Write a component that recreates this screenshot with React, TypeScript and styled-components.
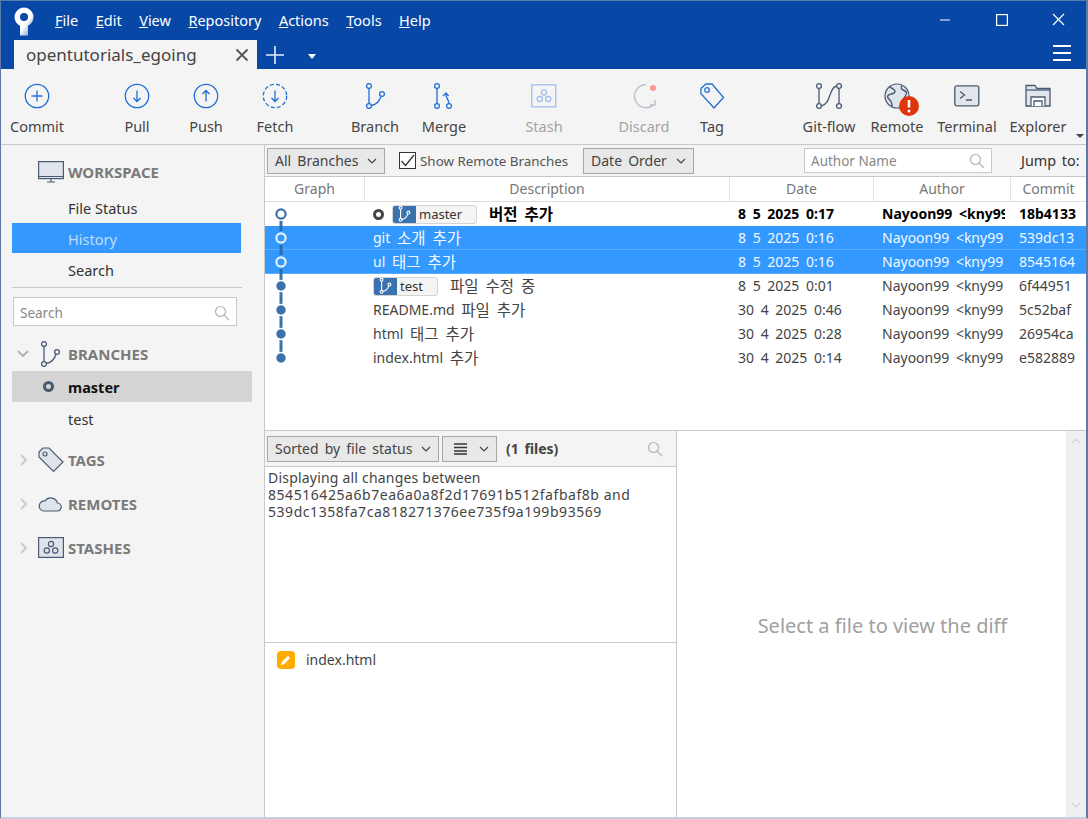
import React from "react";
import styled, { createGlobalStyle } from "styled-components";

const Global = createGlobalStyle`
  html, body { margin: 0; padding: 0; background: #fff; }
  #root { width: 1088px; height: 819px; overflow: hidden; }
  * { box-sizing: border-box; }
`;
const FONT = `"Noto Sans", "Noto Sans CJK KR", sans-serif`;

const Win = styled.div`
  width: 1088px; height: 819px; display: flex; flex-direction: column;
  font-family: ${FONT}; font-size: 14px; color: #333;
  border: 1px solid #5a7aa8; border-bottom: 2px solid #c4cfdf; border-right-width: 2px; background: #f4f4f4; overflow: hidden;
`;
const Title = styled.div`height: 68px; background: #0747a6; display: flex; flex-direction: column; flex: none;`;
const TopRow = styled.div`height: 39px; display: flex; align-items: center; padding-left: 12px;`;
const Menu = styled.div`display: flex; gap: 17.5px; margin-left: 20px; margin-top: -2px;`;
const MenuItem = styled.span`color: #fff; font-size: 14.5px; line-height: 20px;`;
const WinBtns = styled.div`margin-left: auto; display: flex; height: 39px;`;
const WinBtn = styled.div`width: 56px; display: flex; align-items: center; justify-content: center; color: #fff; padding-bottom: 2px;`;
const TabRow = styled.div`height: 29px; display: flex; align-items: stretch; padding-left: 13px;`;
const Tab = styled.div`
  width: 243px; background: #f4f4f4; display: flex; align-items: center; justify-content: space-between;
  padding: 0 8px 0 12px; font-size: 17px; color: #444; line-height: 26px;
`;
const TabAdd = styled.div`width: 36px; display: flex; align-items: center; justify-content: center; color: #e8eef8;`;
const TabCaret = styled.div`
  width: 0; height: 0; margin: 14px 0 0 15px; border-left: 4.5px solid transparent; border-right: 4.5px solid transparent; border-top: 5px solid #fff;
`;
const Burger = styled.div`margin: 0 15px 0 auto; width: 18px; padding-top: 5px; display: flex; flex-direction: column; gap: 5px;`;
const BurgerBar = styled.div`height: 2px; background: #fff;`;

const Toolbar = styled.div`
  height: 76px; flex: none; position: relative; display: flex;
  background: #f4f4f4; border-bottom: 1px solid #c8c8c8;
`;
const Tool = styled.div<{ $x: number; $off?: boolean }>`
  flex: none; width: 68px; margin-left: ${(p) => p.$x}px; display: flex; flex-direction: column; align-items: center;
  padding-top: 11px; color: ${(p) => (p.$off ? "#a4a4a4" : "#444")}; font-size: 14.5px;
`;
const ToolIcon = styled.div`height: 32px; display: flex; align-items: center; justify-content: center; position: relative;`;
const ToolLabel = styled.div`line-height: 20px; margin-top: 4px; white-space: nowrap;`;
const MoreCaret = styled.div`
  position: absolute; right: 2px; bottom: 6px; width: 0; height: 0;
  border-left: 4px solid transparent; border-right: 4px solid transparent; border-top: 4px solid #444;
`;

const Body = styled.div`flex: 1; display: flex; min-height: 0; background: #fff;`;
const Side = styled.div`width: 264px; flex: none; background: #f4f4f4; border-right: 1px solid #c8c8c8; padding: 11px 0 0 11px; color: #333;`;
const SideHead = styled.div<{ $h?: number; $mt?: number; $mb?: number }>`
  display: flex; align-items: center; height: ${(p) => p.$h ?? 32}px; margin-top: ${(p) => p.$mt ?? 0}px; margin-bottom: ${(p) => p.$mb ?? 0}px;
  font-weight: 700; color: #7a7a7a; font-size: 15px; width: 240px;
`;
const Chevron = styled.div<{ $in?: number }>`width: 25px; flex: none; display: flex; justify-content: flex-start; padding-left: ${(p) => p.$in ?? 5}px;`;
const HeadIcon = styled.div`width: 31px; flex: none; display: flex; justify-content: flex-start; padding-left: 1px;`;
const NavItem = styled.div<{ $on?: boolean }>`
  height: 30px; margin-bottom: 1px; width: 229px; padding: 2px 0 0 56px; display: flex; align-items: center; font-size: 14.5px;
  background: ${(p) => (p.$on ? "#3399ff" : "transparent")}; color: ${(p) => (p.$on ? "#c4dcf5" : "#333")};
`;
const SideRule = styled.div`width: 230px; height: 1px; background: #c8c8c8; margin-top: 3px;`;
const SearchField = styled.div<{ $w: number }>`
  width: ${(p) => p.$w}px; height: 29px; background: #fff; border: 1px solid #c8c8c8; display: flex; align-items: center;
  justify-content: space-between; padding: 0 6px; color: #888; font-size: 13.5px;
`;
const AuthorField = styled(SearchField)`margin-left: 110px; height: 25px;`;
const SideSearch = styled(SearchField)`padding-top: 2px;`;
const SideSearchWrap = styled.div`padding: 9px 0 0 1px;`;
const BranchItem = styled.div<{ $on?: boolean }>`
  height: ${(p) => (p.$on ? 31 : 33)}px; width: 240px; display: flex; align-items: center; padding: 1px 0 0 56px; position: relative; font-size: 14.5px;
  background: ${(p) => (p.$on ? "#d4d4d4" : "transparent")}; font-weight: ${(p) => (p.$on ? 700 : 400)}; color: ${(p) => (p.$on ? "#111" : "#333")};
`;
const CurrentDot = styled.div`
  position: absolute; left: 31px; top: 10px; width: 11px; height: 11px; border-radius: 50%; border: 3px solid #4a5a72;
`;

const Main = styled.div`flex: 1; min-width: 0; display: flex; flex-direction: column; background: #fff;`;
const Filter = styled.div`
  height: 32px; flex: none; display: flex; align-items: center; background: #f4f4f4; padding-left: 2px; border-bottom: 1px solid #c8c8c8; font-size: 14px;
`;
const Drop = styled.div<{ $w: number }>`
  width: ${(p) => p.$w}px; height: 26px; border: 1px solid #a8a8a8; background: #e8e8e8; display: flex; align-items: center; justify-content: space-between;
  padding: 0 7px 0 7px; color: #444; font-size: 14px; flex: none; word-spacing: 2.5px; white-space: nowrap;
`;
const Check = styled.div`
  width: 17px; height: 17px; border: 1px solid #333; background: #fff; margin: 0 4px 0 14px; display: flex; align-items: center; justify-content: center;
`;
const FilterLabel = styled.span`width: 163px; font-size: 13.4px; color: #555; white-space: nowrap;`;
const JumpLabel = styled.span`margin-left: 29px; color: #333; font-size: 14.4px; word-spacing: 2px; white-space: nowrap;`;
const HeadRow = styled.div`height: 25px; flex: none; display: flex; border-bottom: 1px solid #dcdcdc; background: #fff;`;
const HeadCell = styled.div<{ $w: number }>`
  width: ${(p) => p.$w}px; flex: none; text-align: center; color: #777; font-size: 14px; line-height: 23px; border-right: 1px solid #e2e2e2;
`;
const Rows = styled.div`height: 229px; flex: none; background: #fff; border-bottom: 1px solid #c8c8c8;`;
const Row = styled.div<{ $sel?: boolean; $bold?: boolean }>`
  height: 24px; display: flex; align-items: center; font-size: 14px; line-height: 24px; white-space: pre; word-spacing: 3px;
  background: ${(p) => (p.$sel ? "#3399ff" : "#fff")}; color: ${(p) => (p.$sel ? "#f2f8ff" : p.$bold ? "#000" : "#444")};
  font-weight: ${(p) => (p.$bold ? 700 : 400)};
  box-shadow: ${(p) => (p.$sel ? "inset 0 -1px 0 #5aadff" : "none")};
`;
const GraphCell = styled.div`width: 100px; height: 24px; flex: none; display: flex;`;
const Cell = styled.div<{ $w: number }>`
  width: ${(p) => p.$w}px; flex: none; padding-left: 8px; overflow: hidden; display: flex; align-items: center;
`;
const CellClip = styled.div`width: 123px; overflow: hidden;`;
const Ko = styled.span`font-size: 15.5px;`;
const HeadDot = styled.div`width: 11px; height: 11px; border-radius: 50%; border: 3px solid #444; margin-right: 8px; flex: none;`;
const Ref = styled.div<{ $w: number }>`
  width: ${(p) => p.$w}px; height: 19px; border: 1px solid #d4d4d4; border-radius: 3px; background: #f4f4f4; display: flex; align-items: center; flex: none;
  margin-right: 12px; font-weight: 400; color: #333; font-size: 13px; overflow: hidden;
`;
const RefIcon = styled.div`width: 23px; height: 17px; flex: none; background: #3a72ae; display: flex; align-items: center; justify-content: center; margin-right: 3px;`;

const Lower = styled.div`flex: 1; display: flex; min-height: 0;`;
const Files = styled.div`width: 412px; flex: none; display: flex; flex-direction: column; border-right: 1px solid #c8c8c8;`;
const FilesBar = styled(Filter)`height: 36px;`;
const FilesCount = styled.span`font-weight: 700; color: #444; font-size: 14px; margin-left: 9px; word-spacing: 2px;`;
const GapDrop = styled.div`margin-left: 3px;`;
const ListGlyph = styled.svg`margin-left: 4px;`;
const FilesSearch = styled.div`margin-left: auto; padding-right: 13px; display: flex;`;
const Info = styled.div`
  height: 176px; flex: none; border-bottom: 1px solid #c8c8c8; padding: 2px 3px; font-size: 14px; line-height: 17px; color: #444; background: #fff; letter-spacing: 0.2px;
`;
const Hash = styled.span`letter-spacing: 0.55px;`;
const FileRow = styled.div`display: flex; align-items: center; height: 33px; padding-left: 12px; color: #444; font-size: 14px;`;
const FileBadge = styled.div`
  width: 18px; height: 18px; border-radius: 4px; background: #ffab00; display: flex; align-items: center; justify-content: center; margin-right: 11px;
`;
const Diff = styled.div`flex: 1; display: flex; background: #fff; min-width: 0;`;
const DiffMsg = styled.div`flex: 1; display: flex; align-items: center; justify-content: center; color: #a0a0a0; font-size: 20px; padding: 2px 0 0 22px;`;
const Scroll = styled.div`
  width: 20px; flex: none; background: #efefef; display: flex; flex-direction: column; justify-content: space-between; align-items: center; padding: 7px 0 9px;
`;

const BLUE = "#1f6fd6";
const GREY = "#4a5a72";

const Circle = ({ children, dash }: { children: React.ReactNode; dash?: boolean }) => (
  <svg width="26" height="26" viewBox="0 0 26 26" fill="none" stroke={BLUE} strokeWidth="1.3">
    <circle cx="13" cy="13" r="11.7" strokeDasharray={dash ? "4 2.2" : undefined} />
    {children}
  </svg>
);
const Search = () => (
  <svg width="16" height="16" viewBox="0 0 16 16" fill="none" stroke="#b4b4b4" strokeWidth="1.2">
    <circle cx="6.5" cy="6.5" r="5" /><path d="M10.2 10.2 15 15" />
  </svg>
);
const Caret = () => (
  <svg width="10" height="6" viewBox="0 0 10 6" fill="none" stroke="#444" strokeWidth="1.2"><path d="M1 1l4 4 4-4" /></svg>
);
const BranchGlyph = ({ c, s = 1 }: { c: string; s?: number }) => (
  <svg width={24 * s} height={26 * s} viewBox="0 0 24 26" fill="none" stroke={c} strokeWidth={1.3 / Math.max(s, 0.7)}>
    <circle cx="6" cy="3" r="2.4" /><circle cx="6" cy="23" r="2.4" /><circle cx="19" cy="11" r="2.4" />
    <path d="M6 5.4v15.2M8.4 22.5c5 -1 8 -4 9.6 -9.3" />
  </svg>
);
const RightChevron = () => (
  <svg width="8" height="12" viewBox="0 0 8 12" fill="none" stroke="#cccccc" strokeWidth="2"><path d="M1 1l5 5-5 5" /></svg>
);

const graph = (sel: boolean, mode: string) => {
  const c = sel ? "#2f6aa8" : "#3a72ae";
  const bg = sel ? "#3399ff" : "#fff";
  const open = mode === "open" || mode === "first";
  return (
    <svg width="100" height="24" viewBox="0 0 100 24">
      {mode !== "first" && <path d="M16 0V12" stroke={c} strokeWidth="3" />}
      {mode !== "last" && <path d="M16 12V24" stroke={c} strokeWidth="3" />}
      {open ? (
        <>
          <circle cx="16" cy="12" r="7" fill={bg} />
          <circle cx="16" cy="12" r="4.6" fill={bg} stroke={sel ? "#e8f2ff" : c} strokeWidth="2.2" />
        </>
      ) : (
        <circle cx="16" cy="12" r="5.5" fill={c} stroke={bg} strokeWidth="1.6" />
      )}
    </svg>
  );
};

const rows = [
  { g: "first", pre: "", ko: "버전 추가", date: "8 5 2025 0:17", c: "18b4133", bold: true, ref: "master" },
  { g: "open", pre: "git ", ko: "소개 추가", date: "8 5 2025 0:16", c: "539dc13", sel: true },
  { g: "open", pre: "ul ", ko: "태그 추가", date: "8 5 2025 0:16", c: "8545164", sel: true },
  { g: "fill", pre: "", ko: "파일 수정 중", date: "8 5 2025 0:01", c: "6f44951", ref: "test" },
  { g: "fill", pre: "README.md ", ko: "파일 추가", date: "30 4 2025 0:46", c: "5c52baf" },
  { g: "fill", pre: "html ", ko: "태그 추가", date: "30 4 2025 0:28", c: "26954ca" },
  { g: "last", pre: "index.html ", ko: "추가", date: "30 4 2025 0:14", c: "e582889" },
];

export default function App() {
  return (
    <Win>
      <Global />
      <Title>
        <TopRow>
          <svg width="22" height="30" viewBox="0 0 22 30">
            <defs>
              <linearGradient id="logoFade" x1="0.3" y1="0.2" x2="0.9" y2="0.8">
                <stop offset="0.55" stopColor="#fff" />
                <stop offset="1" stopColor="#8fb0e0" />
              </linearGradient>
            </defs>
            <path d="M11 1.5a9.6 9.6 0 0 1 4 18.3V29.5H7V19.8A9.6 9.6 0 0 1 11 1.5z" fill="url(#logoFade)" />
            <circle cx="11" cy="11" r="4" fill="#0747a6" />
          </svg>
          <Menu>
            {["File", "Edit", "View", "Repository", "Actions", "Tools", "Help"].map((m) => (
              <MenuItem key={m}><u>{m[0]}</u>{m.slice(1)}</MenuItem>
            ))}
          </Menu>
          <WinBtns>
            <WinBtn><svg width="12" height="12" viewBox="0 0 12 12" stroke="#fff" strokeWidth="1"><path d="M-2 6h12" /></svg></WinBtn>
            <WinBtn><svg width="12" height="12" viewBox="0 0 12 12" fill="none" stroke="#fff" strokeWidth="1.2"><rect x=".6" y=".6" width="10.8" height="10.8" /></svg></WinBtn>
            <WinBtn><svg width="13" height="13" viewBox="0 0 13 13" stroke="#fff" strokeWidth="1.2"><path d="M1 1l11 11M12 1 1 12" /></svg></WinBtn>
          </WinBtns>
        </TopRow>
        <TabRow>
          <Tab>
            opentutorials_egoing
            <svg width="14" height="14" viewBox="0 0 14 14" stroke="#555" strokeWidth="1.8"><path d="M1.5 1.5l11 11M12.5 1.5l-11 11" /></svg>
          </Tab>
          <TabAdd><svg width="18" height="18" viewBox="0 0 18 18" stroke="#e8eef8" strokeWidth="1.6"><path d="M9 0v18M0 9h18" /></svg></TabAdd>
          <TabCaret />
          <Burger><BurgerBar /><BurgerBar /><BurgerBar /></Burger>
        </TabRow>
      </Title>

      <Toolbar>
        <Tool $x={2}><ToolIcon><Circle><path d="M13 7.5v11M7.5 13h11" /></Circle></ToolIcon><ToolLabel>Commit</ToolLabel></Tool>
        <Tool $x={32}><ToolIcon><Circle><path d="M13 7.5v11M9.5 15l3.5 3.5 3.5-3.5" /></Circle></ToolIcon><ToolLabel>Pull</ToolLabel></Tool>
        <Tool $x={1}><ToolIcon><Circle><path d="M13 18.5v-11M9.5 11l3.5-3.5 3.5 3.5" /></Circle></ToolIcon><ToolLabel>Push</ToolLabel></Tool>
        <Tool $x={1}><ToolIcon><Circle dash><path d="M13 7.5v11M9.5 15l3.5 3.5 3.5-3.5" /></Circle></ToolIcon><ToolLabel>Fetch</ToolLabel></Tool>
        <Tool $x={32}><ToolIcon><BranchGlyph c={BLUE} /></ToolIcon><ToolLabel>Branch</ToolLabel></Tool>
        <Tool $x={1}><ToolIcon>
          <svg width="24" height="26" viewBox="0 0 24 26" fill="none" stroke={BLUE} strokeWidth="1.3">
            <circle cx="5" cy="3" r="2.4" /><circle cx="5" cy="23" r="2.4" /><circle cx="17" cy="23" r="2.4" />
            <path d="M5 5.4v15.2M17 20.6c0-4-3-5-3-9M11 13l3-3 2.6 3" />
          </svg>
        </ToolIcon><ToolLabel>Merge</ToolLabel></Tool>
        <Tool $x={32} $off><ToolIcon>
          <svg width="26" height="26" viewBox="0 0 26 26" fill="none" stroke="#9cbdea" strokeWidth="1.2">
            <rect x=".8" y="1.8" width="24" height="22" /><circle cx="13" cy="9.5" r="2.6" /><circle cx="8.8" cy="16" r="2.6" /><circle cx="17.2" cy="16" r="2.6" />
          </svg>
        </ToolIcon><ToolLabel>Stash</ToolLabel></Tool>
        <Tool $x={32} $off><ToolIcon>
          <svg width="26" height="28" viewBox="0 0 26 28" fill="none" stroke="#b8bec8" strokeWidth="1.3">
            <path d="M15 2.7A11.5 11.5 0 1 0 23 22.5M24 18v5h-5" />
            <circle cx="22" cy="6" r="3" fill="#fa9a8c" stroke="none" />
          </svg>
        </ToolIcon><ToolLabel>Discard</ToolLabel></Tool>
        <Tool $x={0}><ToolIcon>
          <svg width="26" height="28" viewBox="0 0 26 28" fill="none" stroke={BLUE} strokeWidth="1.3">
            <path d="M2 6.5 7 2h6l11.5 13.5L15 26 1.8 11.5z" /><circle cx="8" cy="8" r="2.3" />
          </svg>
        </ToolIcon><ToolLabel>Tag</ToolLabel></Tool>
        <Tool $x={49}><ToolIcon>
          <svg width="26" height="28" viewBox="0 0 26 28" fill="none" stroke={GREY} strokeWidth="1.3">
            <circle cx="3" cy="4" r="2.4" /><circle cx="3" cy="24" r="2.4" /><circle cx="23" cy="4" r="2.4" /><circle cx="23" cy="24" r="2.4" />
            <path d="M3 6.4v15.2M23 6.4v15.2M20.6 4C13 5 15 22 5.4 24" />
          </svg>
        </ToolIcon><ToolLabel>Git-flow</ToolLabel></Tool>
        <Tool $x={0}><ToolIcon>
          <svg width="26" height="26" viewBox="0 0 26 26" overflow="visible">
            <circle cx="13" cy="13" r="12" fill="#dfe3ea" stroke={GREY} strokeWidth="1.2" />
            <path d="M6 3.5c2 3 5 2 5 5s-5 2-7 4 2 4 3 6 1 5 1 5M18 2.5c-2 3 0 4 2 5s4 2 1 6-2 6-4 8" fill="none" stroke={GREY} strokeWidth="1.4" />
            <circle cx="25" cy="23" r="10" fill="#de350b" />
            <path d="M25 17v7.5" stroke="#fff" strokeWidth="2.6" /><circle cx="25" cy="28" r="1.5" fill="#fff" />
          </svg>
        </ToolIcon><ToolLabel>Remote</ToolLabel></Tool>
        <Tool $x={2}><ToolIcon>
          <svg width="26" height="24" viewBox="0 0 26 24" fill="none" stroke={GREY} strokeWidth="1.3">
            <rect x=".8" y="1.8" width="24" height="20" rx="2" fill="#e2e5ec" /><path d="M6 7.5l4.5 3.5L6 14.5M12 16h6" />
          </svg>
        </ToolIcon><ToolLabel>Terminal</ToolLabel></Tool>
        <Tool $x={3}><ToolIcon>
          <svg width="26" height="26" viewBox="0 0 26 26" fill="none" stroke={GREY} strokeWidth="1.3">
            <path d="M1 23V2.5h9l2 3h13V23z" fill="#e2e5ec" /><path d="M1 7h24" /><path d="M6 23v-9h14v9M9 23v-5h8v5" fill="#fff" />
          </svg>
        </ToolIcon><ToolLabel>Explorer</ToolLabel></Tool>
        <MoreCaret />
      </Toolbar>

      <Body>
        <Side>
          <SideHead $mb={4}>
            <Chevron />
            <HeadIcon>
              <svg width="26" height="22" viewBox="0 0 26 22" fill="none" stroke={GREY} strokeWidth="1.2">
                <rect x=".6" y=".6" width="24.8" height="17" fill="#dfe3ea" /><path d="M.6 15.5h24.8M9 21h8M13 18v3" />
              </svg>
            </HeadIcon>
            WORKSPACE
          </SideHead>
          <NavItem>File Status</NavItem>
          <NavItem $on>History</NavItem>
          <NavItem>Search</NavItem>
          <SideRule />
          <SideSearchWrap>
            <SideSearch $w={224}>Search<Search /></SideSearch>
          </SideSearchWrap>
          <SideHead $mt={10} $h={35}>
            <Chevron><svg width="12" height="8" viewBox="0 0 12 8" fill="none" stroke="#b4b4b4" strokeWidth="2"><path d="M1 1l5 5 5-5" /></svg></Chevron>
            <HeadIcon><BranchGlyph c={GREY} /></HeadIcon>
            BRANCHES
          </SideHead>
          <BranchItem $on><CurrentDot />master</BranchItem>
          <BranchItem>test</BranchItem>
          <SideHead $mt={7} $h={35}>
            <Chevron $in={8}><RightChevron /></Chevron>
            <HeadIcon>
              <svg width="26" height="26" viewBox="0 0 26 26" fill="#dfe3ea" stroke={GREY} strokeWidth="1.2">
                <path d="M1 5 5 1h6l14 14-9.5 9.5L1 10z" /><circle cx="7" cy="7" r="2" fill="none" />
              </svg>
            </HeadIcon>
            TAGS
          </SideHead>
          <SideHead $mt={9} $h={35}>
            <Chevron $in={8}><RightChevron /></Chevron>
            <HeadIcon>
              <svg width="24" height="16" viewBox="0 0 24 16" fill="#dfe3ea" stroke={GREY} strokeWidth="1.2">
                <path d="M5.5 15H19a4 4 0 0 0 .5-8A7 7 0 0 0 7 5a5 5 0 0 0-1.5 10z" />
              </svg>
            </HeadIcon>
            REMOTES
          </SideHead>
          <SideHead $mt={9} $h={35}>
            <Chevron $in={8}><RightChevron /></Chevron>
            <HeadIcon>
              <svg width="26" height="21" viewBox="0 0 26 21" fill="#dfe3ea" stroke={GREY} strokeWidth="1.2">
                <rect x=".6" y=".6" width="24.8" height="19.8" /><g fill="none"><circle cx="13" cy="7" r="2.6" /><circle cx="8.8" cy="13.5" r="2.6" /><circle cx="17.2" cy="13.5" r="2.6" /></g>
              </svg>
            </HeadIcon>
            STASHES
          </SideHead>
        </Side>

        <Main>
          <Filter>
            <Drop $w={118}>All Branches <Caret /></Drop>
            <Check><svg width="15" height="13" viewBox="0 0 15 13" fill="none" stroke="#333" strokeWidth="1.3"><path d="M1.5 7l4 4.5L14 1" /></svg></Check>
            <FilterLabel>Show Remote Branches</FilterLabel>
            <Drop $w={111}>Date Order <Caret /></Drop>
            <AuthorField $w={188}>Author Name<Search /></AuthorField>
            <JumpLabel>Jump to:</JumpLabel>
          </Filter>
          <HeadRow>
            <HeadCell $w={100}>Graph</HeadCell>
            <HeadCell $w={365}>Description</HeadCell>
            <HeadCell $w={144}>Date</HeadCell>
            <HeadCell $w={137}>Author</HeadCell>
            <HeadCell $w={76}>Commit</HeadCell>
          </HeadRow>
          <Rows>
            {rows.map((r, i) => (
              <Row key={i} $sel={r.sel} $bold={r.bold}>
                <GraphCell>{graph(!!r.sel, r.g)}</GraphCell>
                <Cell $w={365}>
                  {r.bold && <HeadDot />}
                  {r.ref && (
                    <Ref $w={r.ref === "master" ? 85 : 65}>
                      <RefIcon><BranchGlyph c="#fff" s={0.6} /></RefIcon>{r.ref}
                    </Ref>
                  )}
                  {r.pre}<Ko>{r.ko}</Ko>
                </Cell>
                <Cell $w={144}>{r.date}</Cell>
                <Cell $w={137}><CellClip>Nayoon99 &lt;kny99</CellClip></Cell>
                <Cell $w={76}>{r.c}</Cell>
              </Row>
            ))}
          </Rows>
          <Lower>
            <Files>
              <FilesBar>
                <Drop $w={172}>Sorted by file status <Caret /></Drop>
                <GapDrop>
                  <Drop $w={55}>
                    <ListGlyph width="13" height="12" viewBox="0 0 13 12" stroke="#333" strokeWidth="1.3"><path d="M0 1h13M0 4.5h13M0 8h13M0 11h13" /></ListGlyph>
                    <Caret />
                  </Drop>
                </GapDrop>
                <FilesCount>(1 files)</FilesCount>
                <FilesSearch><Search /></FilesSearch>
              </FilesBar>
              <Info>
                Displaying all changes between<br />
                <Hash>854516425a6b7ea6a0a8f2d17691b512fafbaf8b and</Hash><br />
                <Hash>539dc1358fa7ca818271376ee735f9a199b93569</Hash>
              </Info>
              <FileRow>
                <FileBadge>
                  <svg width="12" height="12" viewBox="0 0 12 12" fill="#fff"><path d="M1 11l.8-3L8 1.8 10.2 4 4 10.2z" /></svg>
                </FileBadge>
                index.html
              </FileRow>
            </Files>
            <Diff>
              <DiffMsg>Select a file to view the diff</DiffMsg>
              <Scroll>
                <svg width="10" height="6" viewBox="0 0 10 6" fill="none" stroke="#d4d4d4" strokeWidth="1.2"><path d="M1 5l4-4 4 4" /></svg>
                <svg width="10" height="6" viewBox="0 0 10 6" fill="none" stroke="#d4d4d4" strokeWidth="1.2"><path d="M1 1l4 4 4-4" /></svg>
              </Scroll>
            </Diff>
          </Lower>
        </Main>
      </Body>
    </Win>
  );
}
